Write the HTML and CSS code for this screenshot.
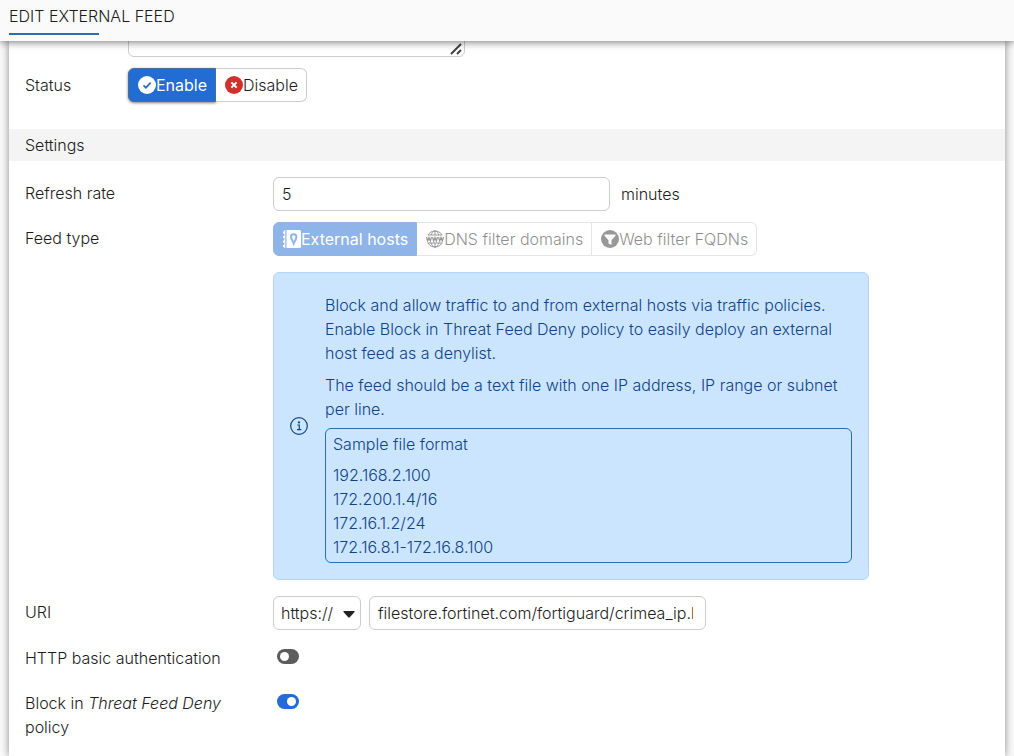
FILE: index.html
```html
<!DOCTYPE html>
<html lang="en">
<head>
    <meta charset="UTF-8">
    <meta name="viewport" content="width=device-width, initial-scale=1.0">
    <title>Edit External Feed</title>
    <link rel="stylesheet" href="styles.css">
</head>
<body>
    <header class="page-header">
        <h1>EDIT EXTERNAL FEED</h1>
    </header>
    <form class="panel">
        <div class="comments">
            <textarea aria-label="Comments" rows="3"></textarea>
        </div>
        <div class="row status-row">
            <span class="row-label" id="statusLabel">Status</span>
            <div class="button-group" role="radiogroup" aria-labelledby="statusLabel">
                <label class="option raised">
                    <input type="radio" name="status" checked>
                    <svg viewBox="0 0 18 18" width="18" height="18"><circle cx="9" cy="9" r="9" fill="#fff"/><path d="M5.5 9.3l2.4 2.4 4.8-5" fill="none" stroke="#226cd3" stroke-width="1.7"/></svg>
                    <span>Enable</span>
                </label>
                <label class="option">
                    <input type="radio" name="status">
                    <svg viewBox="0 0 18 18" width="18" height="18"><circle cx="9" cy="9" r="9" fill="#d0312d"/><path d="M6.4 6.4l5.2 5.2M11.6 6.4l-5.2 5.2" fill="none" stroke="#fff" stroke-width="2"/></svg>
                    <span>Disable</span>
                </label>
            </div>
        </div>

        <h2 class="section-title">Settings</h2>

        <div class="settings">
            <div class="row">
                <label class="row-label" for="refreshRate">Refresh rate</label>
                <div class="field">
                    <input type="text" class="text-input" id="refreshRate" value="5">
                    <span class="unit">minutes</span>
                </div>
            </div>
            <div class="row feed-row">
                <span class="row-label" id="feedLabel">Feed type</span>
                <div class="feed">
                    <div class="button-group disabled" role="radiogroup" aria-labelledby="feedLabel">
                        <label class="option">
                            <input type="radio" name="feed" checked disabled>
                            <svg viewBox="0 0 18 18" width="18" height="18">
                                <path d="M3.5 0h13a1.5 1.5 0 0 1 1.5 1.5v15a1.5 1.5 0 0 1-1.5 1.5h-13z" fill="#fff"/>
                                <path d="M1.8 0v18" stroke="#fff" stroke-width="1"/>
                                <path d="M0 2.5h2M0 7h2M0 11.5h2M0 16h2" stroke="#fff" stroke-width="2"/>
                                <path d="M10.7 13.5C9.5 10.5 8 9 8 7a2.7 2.7 0 0 1 5.4 0c0 2-1.500 3.500-2.700 6.500z" fill="none" stroke="#226cd3" stroke-width="2"/>
                            </svg>
                            <span>External hosts</span>
                        </label>
                        <label class="option">
                            <input type="radio" name="feed" disabled>
                            <svg viewBox="0 0 18 18" width="18" height="18" fill="none" stroke="#333">
                                <path d="M1.9 5A8.3 8.3 0 0 1 16.1 5zM1.9 13a8.3 8.3 0 0 0 14.2 0zM9 .8V5M9 13v4.2M5.2 5C5.7 3 7 1.2 9 .8c2 .4 3.3 2.2 3.8 4.2M5.2 13c.5 2 1.8 3.8 3.8 4.2 2-.4 3.3-2.2 3.8-4.2"/>
                                <path d="M.5 7l1.2 4L3 7.5 4.3 11l1.2-4M6.5 7l1.2 4L9 7.5l1.3 3.5 1.2-4M12.5 7l1.2 4L15 7.5l1.3 3.5 1.2-4" stroke-width="1.2"/>
                            </svg>
                            <span>DNS filter domains</span>
                        </label>
                        <label class="option">
                            <input type="radio" name="feed" disabled>
                            <svg viewBox="0 0 18 18" width="18" height="18"><circle cx="9" cy="9" r="9" fill="#333"/><path d="M3.5 4.5h11v1.3l-4 4.4V15l-3-1.500v-3.300l-4-4.400z" fill="#fff"/></svg>
                            <span>Web filter FQDNs</span>
                        </label>
                    </div>
                    <div class="info">
                        <svg class="info-icon" viewBox="0 0 18 18" width="18" height="18"><circle cx="9" cy="9" r="8.3" fill="none" stroke="#0e4487" stroke-width="1.2"/><path d="M7.3 8h2v4.6M7 12.7h4.3" fill="none" stroke="#0e4487" stroke-width="1.2"/><circle cx="9" cy="5.4" r="1.1" fill="#0e4487"/></svg>
                        <div class="info-body">
                            <p>Block and allow traffic to and from external hosts via traffic policies. Enable Block in Threat Feed Deny policy to easily deploy an external host feed as a denylist.</p>
                            <p>The feed should be a text file with one IP address, IP range or subnet per line.</p>
                            <div class="sample">
                                <p>Sample file format</p>
                                <div>192.168.2.100</div>
                                <div>172.200.1.4/16</div>
                                <div>172.16.1.2/24</div>
                                <div>172.16.8.1-172.16.8.100</div>
                            </div>
                        </div>
                    </div>
                </div>
            </div>
            <div class="row uri-row">
                <label class="row-label" for="uri">URI</label>
                <div class="field">
                    <select class="scheme" aria-label="Protocol">
                        <option>https://</option>
                        <option>http://</option>
                    </select>
                    <input type="text" class="text-input" id="uri" value="filestore.fortinet.com/fortiguard/crimea_ip.list">
                </div>
            </div>
            <div class="row">
                <label class="row-label" for="httpAuth">HTTP basic authentication</label>
                <input type="checkbox" class="toggle" id="httpAuth">
            </div>
            <div class="row">
                <label class="row-label" for="blockPolicy">Block in <em>Threat Feed Deny</em> policy</label>
                <input type="checkbox" class="toggle" id="blockPolicy" checked>
            </div>
        </div>
    </form>
</body>
</html>
```
FILE: styles.css
```css
* {
    box-sizing: border-box;
}

body {
    margin: 0;
    min-height: 100vh;
    display: flex;
    flex-direction: column;
    overflow: hidden;
    font-family: Inter, sans-serif;
    font-size: 16px;
    font-weight: 300;
    line-height: 24px;
    color: #1c1c1c;
    background-color: #fafafa;
}

input, select, textarea {
    font: inherit;
    color: inherit;
}

.page-header {
    position: relative;
    z-index: 1;
    height: 41px;
    padding: 4px 9px;
    background-color: #fafafa;
    box-shadow: 0 1px 8px rgba(0, 0, 0, 0.55);
}

.page-header h1 {
    margin: 0;
    font-size: 16px;
    font-weight: 300;
}

/* short accent line under the title */
.page-header h1::after {
    content: "";
    display: block;
    width: 90px;
    height: 2px;
    margin-top: 5px;
    background-color: #2b6cb5;
}

.panel {
    flex: 1;
    margin: 0 9px;
    background-color: #fff;
    box-shadow: 0 0 8px rgba(0, 0, 0, 0.45);
}

/* the comments box is scrolled partly under the header */
.comments {
    display: flex;
    align-items: flex-end;
    height: 16px;
    margin: 0 16px 11px 119px;
    overflow: hidden;
}

.comments textarea {
    flex: none;
    width: 337px;
    border: 1px solid #ccc;
    border-radius: 6px;
}

.comments textarea::-webkit-resizer {
    background: url("data:image/svg+xml,%3Csvg xmlns='http://www.w3.org/2000/svg' width='15' height='15'%3E%3Cpath d='M2 13L12 3M8 13l4-4' stroke='%23444' stroke-width='2'/%3E%3C/svg%3E") no-repeat right bottom;
}

.row {
    display: flex;
    align-items: flex-start;
    min-height: 34px;
    margin-bottom: 11px;
}

.row-label {
    flex: none;
    width: 248px;
    padding: 4px 32px 0 0;
}

.status-row {
    margin: 0 16px 27px;
}

.status-row .row-label {
    width: 103px;
    padding-top: 5px;
}

.section-title {
    margin: 0 0 16px;
    padding: 4px 16px;
    font-size: 16px;
    font-weight: 300;
    background-color: #f4f4f4;
}

.settings {
    padding: 0 16px;
}

.button-group {
    display: flex;
    width: fit-content;
}

.option {
    display: flex;
    align-items: center;
    height: 34px;
    padding: 0 8px 0 9px;
    border: 1px solid #ccc;
    border-left-width: 0;
    background-color: #fff;
    cursor: pointer;
}

.option:first-child {
    border-left-width: 1px;
    border-radius: 6px 0 0 6px;
}

.option:last-child {
    border-radius: 0 6px 6px 0;
}

.option input {
    appearance: none;
    position: absolute;
    width: 0;
    height: 0;
    margin: 0;
}

.option:has(input:checked) {
    color: #fff;
    font-weight: 400;
    border-color: #226cd3;
    background-color: #226cd3;
}

.option.raised:has(input:checked) {
    border-color: #4a6c99;
    box-shadow: 0 1px 3px rgba(0, 0, 0, 0.5);
}

.disabled {
    opacity: 0.5;
}

.disabled .option {
    cursor: not-allowed;
}

.field {
    display: flex;
    align-items: center;
    gap: 11px;
}

.text-input {
    width: 337px;
    height: 34px;
    padding: 0 12px 0 8px;
    border: 1px solid #ccc;
    border-radius: 6px;
    background-color: #fff;
}

.uri-row {
    margin-bottom: 12px;
}

.uri-row .field {
    gap: 8px;
}

.scheme {
    appearance: none;
    width: 88px;
    height: 34px;
    padding: 0 7px;
    border: 1px solid #ccc;
    border-radius: 6px;
    background: #fff url("data:image/svg+xml,%3Csvg xmlns='http://www.w3.org/2000/svg' width='12' height='7'%3E%3Cpath d='M1 0h10q1 0 .5 1L7 6q-1 1-2 0L.5 1Q0 0 1 0z' fill='%23222'/%3E%3C/svg%3E") no-repeat right 5px top 14px;
}

.feed-row {
    margin-bottom: 16px;
}

.info {
    display: flex;
    align-items: center;
    gap: 17px;
    max-width: 596px;
    margin-top: 16px;
    padding: 16px;
    color: #0e4487;
    border: 1px solid #b5d4f6;
    border-radius: 6px;
    background-color: #cce5ff;
}

.info-icon {
    flex: none;
}

.info-body {
    flex: 1;
    padding-top: 4px;
}

.info p {
    margin: 0 0 7px;
}

.info-body > p:first-child {
    margin-bottom: 8px;
}

.sample {
    padding: 3px 7px;
    border: 1px solid #2b6cb5;
    border-radius: 6px;
}

.toggle {
    appearance: none;
    display: flex;
    width: 22px;
    height: 15px;
    margin: 7px 4px;
    padding: 3px;
    border-radius: 8px;
    background-color: #5c5c5c;
    cursor: pointer;
}

.toggle::before {
    content: "";
    width: 9px;
    height: 9px;
    border-radius: 50%;
    background-color: #fff;
}

.toggle:checked {
    justify-content: flex-end;
    background-color: #226cd3;
}
```
